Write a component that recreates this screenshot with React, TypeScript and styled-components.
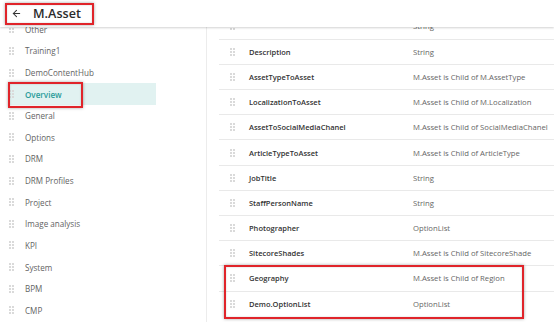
import React from "react";
import styled, { createGlobalStyle } from "styled-components";
import { ArrowLeft } from "lucide-react";

const Global = createGlobalStyle`
  html, body { margin: 0; padding: 0; background: #fff; }
  body { font-family: "Open Sans", "Liberation Sans", sans-serif; }
  * { box-sizing: border-box; }
`;

const Page = styled.div`
  position: relative;
  width: 554px;
  height: 322px;
  overflow: hidden;
  background: #fff;
  display: flex;
  flex-direction: column;
`;

const Header = styled.header`
  position: relative;
  z-index: 2;
  height: 27px;
  flex: none;
  background: #fff;
  display: flex;
  align-items: center;
  padding-left: 11px;
  gap: 11px;
  box-shadow: 0 1px 2px rgba(0, 0, 0, 0.18);
`;

const Title = styled.h1`
  margin: 0;
  font-size: 12.6px;
  font-weight: 600;
  color: #2b2b2b;
`;

const Body = styled.div`
  flex: 1;
  display: flex;
  overflow: hidden;
`;

const Sidebar = styled.nav`
  width: 207px;
  flex: none;
  border-right: 1px solid #ececec;
  padding-left: 8px;
  padding-right: 50px;
`;

const SideList = styled.div`
  margin-top: -8.5px;
  display: flex;
  flex-direction: column;
`;

const SideItem = styled.div<{ $active?: boolean }>`
  height: 21.62px;
  flex: none;
  display: flex;
  align-items: center;
  gap: 11px;
  padding-left: 1px;
  font-size: 8.1px;
  white-space: nowrap;
  color: ${(p) => (p.$active ? "#2a9c9a" : "#636363")};
  background: ${(p) => (p.$active ? "#e1f2f1" : "transparent")};
  font-weight: ${(p) => (p.$active ? 600 : 400)};
`;

const Main = styled.main`
  flex: 1;
  padding-left: 12px;
`;

const Table = styled.div`
  margin-top: -13.5px;
  display: flex;
  flex-direction: column;
`;

const Row = styled.div<{ $first?: boolean }>`
  height: 25.2px;
  flex: none;
  display: grid;
  grid-template-columns: 19px 164px 1fr;
  align-items: center;
  border-top: ${(p) => (p.$first ? "none" : "1px solid #e9e9e9")};
  padding-left: 11px;
  white-space: nowrap;
`;

const Name = styled.span`
  font-size: 7.5px;
  font-weight: 600;
  color: #333;
`;

const Type = styled.span`
  font-size: 7.7px;
  color: #666;
`;

const HandleSvg = styled.svg`
  display: block;
  flex: none;
`;

const Annot = styled.div`
  position: absolute;
  z-index: 5;
  border: 2px solid #e0242a;
  box-shadow: 0 0 3px rgba(0, 0, 0, 0.35), inset 0 0 2px rgba(0, 0, 0, 0.2);
  pointer-events: none;
`;

const Handle = () => (
  <HandleSvg width="5" height="8" viewBox="0 0 5 8">
    {[0, 3, 6].map((y) =>
      [0, 3].map((x) => (
        <rect key={`${x}-${y}`} x={x} y={y} width="2" height="2" fill="#dadada" />
      ))
    )}
  </HandleSvg>
);

const sideItems = [
  "Other",
  "Training1",
  "DemoContentHub",
  "Overview",
  "General",
  "Options",
  "DRM",
  "DRM Profiles",
  "Project",
  "Image analysis",
  "KPI",
  "System",
  "BPM",
  "CMP",
];

const rows: [string, string][] = [
  ["", "String"],
  ["Description", "String"],
  ["AssetTypeToAsset", "M.Asset is Child of M.AssetType"],
  ["LocalizationToAsset", "M.Asset is Child of M.Localization"],
  ["AssetToSocialMediaChanel", "M.Asset is Child of SocialMediaChanel"],
  ["ArticleTypeToAsset", "M.Asset is Child of ArticleType"],
  ["JobTitle", "String"],
  ["StaffPersonName", "String"],
  ["Photographer", "OptionList"],
  ["SitecoreShades", "M.Asset is Child of SitecoreShade"],
  ["Geography", "M.Asset is Child of Region"],
  ["Demo.OptionList", "OptionList"],
];

export default function App() {
  return (
    <Page>
      <Global />
      <Header>
        <ArrowLeft size={11} strokeWidth={2.2} color="#333" />
        <Title>M.Asset</Title>
      </Header>
      <Body>
        <Sidebar>
          <SideList>
            {sideItems.map((s) => (
              <SideItem key={s} $active={s === "Overview"}>
                <Handle />
                {s}
              </SideItem>
            ))}
          </SideList>
        </Sidebar>
        <Main>
          <Table>
            {rows.map(([n, t], i) => (
              <Row key={i} $first={i === 0}>
                <Handle />
                <Name>{n}</Name>
                <Type>{t}</Type>
              </Row>
            ))}
          </Table>
        </Main>
      </Body>
      <Annot style={{ left: 5, top: 3, width: 89, height: 22 }} />
      <Annot style={{ left: 8, top: 82, width: 75, height: 26 }} />
      <Annot style={{ left: 224, top: 265, width: 300, height: 54 }} />
    </Page>
  );
}
